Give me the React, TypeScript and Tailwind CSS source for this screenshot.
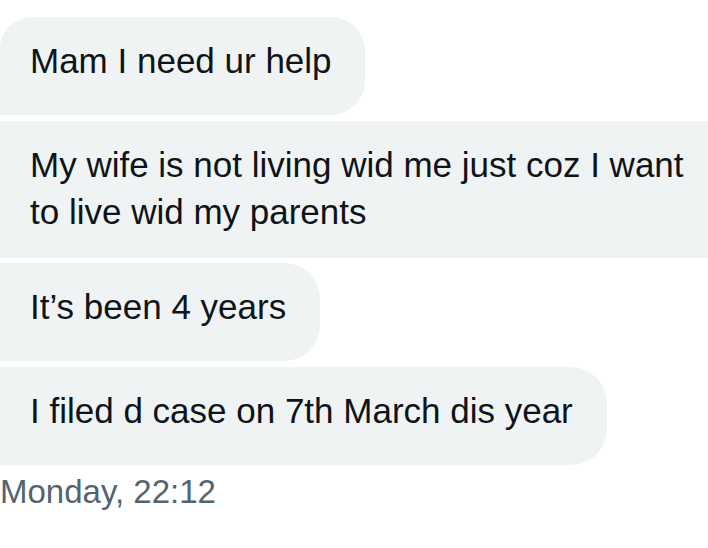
const messages = [
  { text: "Mam I need ur help", first: true },
  { text: "My wife is not living wid me just coz I want to live wid my parents", wide: true },
  { text: "It\u2019s been 4 years" },
  { text: "I filed d case on 7th March dis year" },
];

const App = () => {
  return (
    <div className="min-h-[548px] w-[708px] bg-white pt-[17px] font-['Liberation_Sans',Arial,sans-serif] overflow-hidden">
      <div className="flex flex-col items-start gap-[5.5px]">
        {messages.map((m, i) =>
          m.wide ? (
            <div
              key={i}
              className="w-full bg-[#eff3f4] pl-[30px] pr-[6px] pt-[20px] pb-[23px] text-[35px] leading-[47px] text-[#0f1419]"
            >
              {m.text}
            </div>
          ) : (
            <div
              key={i}
              className={
                m.first
                  ? "bg-[#eff3f4] pl-[30px] pr-[33px] pt-[20px] pb-[31px] text-[35px] leading-[47px] text-[#0f1419] rounded-tl-[32px] rounded-r-[34px]"
                  : "bg-[#eff3f4] pl-[30px] pr-[34px] pt-[20px] pb-[31px] text-[35px] leading-[47px] text-[#0f1419] rounded-r-[36px]"
              }
            >
              {m.text}
            </div>
          )
        )}
      </div>
      <div className="mt-[7px] text-[33px] leading-[40px] text-[#536471]">Monday, 22:12</div>
    </div>
  );
};

export default App;
